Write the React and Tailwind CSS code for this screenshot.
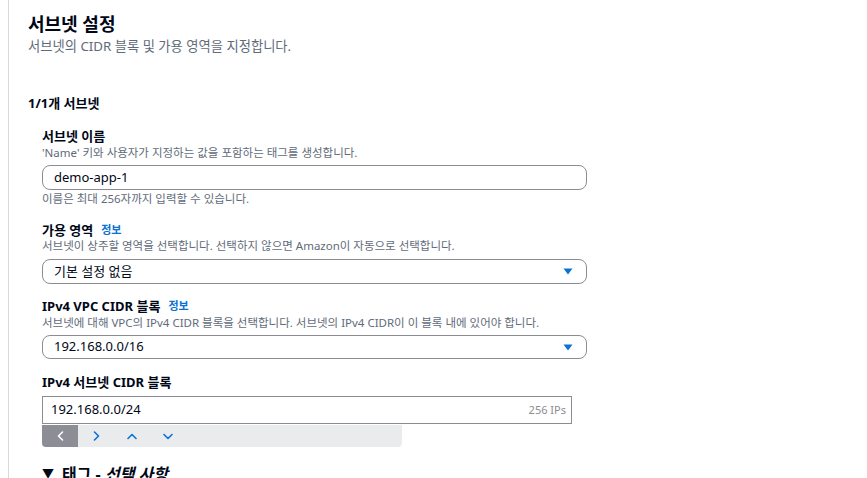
import React from 'react';

const FONT = { fontFamily: '"Noto Sans", "Noto Sans CJK KR", sans-serif' };

function Caret() {
  return (
    <svg width="10" height="7" viewBox="0 0 10 7" className="shrink-0">
      <path d="M0.5 0.5 H9.5 L5 6.5 Z" fill="#0972d3" />
    </svg>
  );
}

function Chevron({ dir, color }) {
  const paths = {
    left: 'M5.5 1 L1.5 5 L5.5 9',
    right: 'M1.5 1 L5.5 5 L1.5 9',
    up: 'M1 5.5 L5 1.5 L9 5.5',
    down: 'M1 1.5 L5 5.5 L9 1.5',
  };
  const horiz = dir === 'left' || dir === 'right';
  return (
    <svg width={horiz ? 7 : 10} height={horiz ? 10 : 7} viewBox={horiz ? '0 0 7 10' : '0 0 10 7'}>
      <path d={paths[dir]} fill="none" stroke={color} strokeWidth="1.6" strokeLinecap="round" strokeLinejoin="round" />
    </svg>
  );
}

function Label({ children, info }) {
  return (
    <div className="flex items-center gap-[8px] text-[13px] leading-[16px] font-bold text-[#000716]">
      <span>{children}</span>
      {info && <span className="text-[11px] font-bold text-[#0972d3]">정보</span>}
    </div>
  );
}

function Desc({ children }) {
  return <div className="text-[11.5px] leading-[16px] text-[#5f6b7a]">{children}</div>;
}

function Select({ value, h }) {
  return (
    <div className={`w-[545px] ${h} border border-[#8c8c94] rounded-[8px] flex items-center justify-between pl-[11px] pr-[13px] text-[13px] text-[#000716]`}>
      <span>{value}</span>
      <Caret />
    </div>
  );
}

export default function App() {
  return (
    <div className="w-[867px] h-[478px] overflow-hidden bg-white pl-[8px]" style={FONT}>
      <div className="h-full border-l border-[#d5dbdb] pl-[19px]">
        <div className="pt-[12px] text-[18px] leading-[24px] font-bold text-[#000716]">서브넷 설정</div>
        <div className="text-[13.3px] leading-[20px] text-[#5f6b7a]">서브넷의 CIDR 블록 및 가용 영역을 지정합니다.</div>

        <div className="mt-[39px] text-[13px] leading-[16px] font-bold text-[#000716]">1/1개 서브넷</div>

        <div className="pl-[14px]">
          <div className="mt-[17px]">
            <Label>서브넷 이름</Label>
          </div>
          <div className="mt-[1px]">
            <Desc>'Name' 키와 사용자가 지정하는 값을 포함하는 태그를 생성합니다.</Desc>
          </div>
          <div className="mt-[4px] w-[545px] h-[25px] border border-[#8c8c94] rounded-[8px] flex items-center pl-[11px] text-[13px] text-[#000716]">
            demo-app-1
          </div>
          <div className="mt-[1px]">
            <Desc>이름은 최대 256자까지 입력할 수 있습니다.</Desc>
          </div>

          <div className="mt-[15px]">
            <Label info>가용 영역</Label>
          </div>
          <Desc>서브넷이 상주할 영역을 선택합니다. 선택하지 않으면 Amazon이 자동으로 선택합니다.</Desc>
          <div className="mt-[5px]">
            <Select value="기본 설정 없음" h="h-[25px]" />
          </div>

          <div className="mt-[14px]">
            <Label info>IPv4 VPC CIDR 블록</Label>
          </div>
          <div className="mt-[1px]">
            <Desc>서브넷에 대해 VPC의 IPv4 CIDR 블록을 선택합니다. 서브넷의 IPv4 CIDR이 이 블록 내에 있어야 합니다.</Desc>
          </div>
          <div className="mt-[4px]">
            <Select value="192.168.0.0/16" h="h-[24px]" />
          </div>

          <div className="mt-[15px]">
            <Label>IPv4 서브넷 CIDR 블록</Label>
          </div>
          <div className="mt-[6px] w-[530px] h-[28px] border border-[#8c8c94] flex items-center justify-between pl-[8px] pr-[5px] text-[13px] text-[#000716]">
            <span>192.168.0.0/24</span>
            <span className="text-[11px] text-[#8c8c94]">256 IPs</span>
          </div>
          <div className="mt-[1px] w-[360px] h-[22px] bg-[#e9ebed] rounded-b-[4px] flex overflow-hidden">
            <div className="w-[36px] h-full bg-[#8d8d95] flex items-center justify-center">
              <Chevron dir="left" color="#ffffff" />
            </div>
            <div className="w-[36px] h-full flex items-center justify-center">
              <Chevron dir="right" color="#0972d3" />
            </div>
            <div className="w-[36px] h-full flex items-center justify-center">
              <Chevron dir="up" color="#0972d3" />
            </div>
            <div className="w-[36px] h-full flex items-center justify-center">
              <Chevron dir="down" color="#0972d3" />
            </div>
          </div>

          <div className="mt-[17px] flex items-center gap-[8px] text-[16px] leading-[20px] font-bold text-[#000716]">
            <span className="text-[12px]">▼</span>
            <span>태그 - <i>선택 사항</i></span>
          </div>
        </div>
      </div>
    </div>
  );
}
